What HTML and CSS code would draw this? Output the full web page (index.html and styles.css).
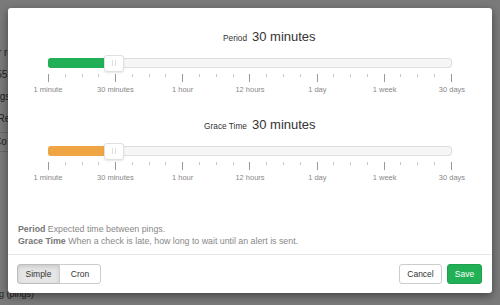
FILE: index.html
```html
<!DOCTYPE html>
<html lang="en">

<head>
    <meta charset="UTF-8">
    <meta name="viewport" content="width=device-width, initial-scale=1.0">
    <title>Update Timeout</title>
    <link rel="stylesheet" href="styles.css">
</head>

<body>
    <!-- page behind the dialog, mostly hidden -->
    <div class="page">
        <div class="page-row"><span>Error re</span></div>
        <div class="page-row"><span>2c1559</span></div>
        <div class="page-row"><span>Tags:</span></div>
        <div class="page-row"><span>Ref</span></div>
        <div class="page-row page-row-line"><span>Co</span></div>
        <div class="page-foot"><span>Last ping (pings)</span></div>
    </div>
    <div class="backdrop"></div>

    <div class="modal">
        <div class="modal-body">
            <!-- period -->
            <div class="slider-group">
                <h2 class="slider-title">
                    <span class="slider-label">Period</span>
                    <span class="slider-value">30 minutes</span>
                </h2>
                <div class="track">
                    <div class="fill fill-period" style="width: 56px"></div>
                    <div class="handle" style="left: 55px"></div>
                </div>
                <div class="ticks">
                    <span class="tick major"></span><span class="tick"></span><span class="tick"></span><span class="tick"></span>
                    <span class="tick major"></span><span class="tick"></span><span class="tick"></span><span class="tick"></span>
                    <span class="tick major"></span><span class="tick"></span><span class="tick"></span><span class="tick"></span>
                    <span class="tick major"></span><span class="tick"></span><span class="tick"></span><span class="tick"></span>
                    <span class="tick major"></span><span class="tick"></span><span class="tick"></span><span class="tick"></span>
                    <span class="tick major"></span><span class="tick"></span><span class="tick"></span><span class="tick"></span>
                    <span class="tick major"></span>
                </div>
                <div class="tick-labels">
                    <span>1 minute</span>
                    <span>30 minutes</span>
                    <span>1 hour</span>
                    <span>12 hours</span>
                    <span>1 day</span>
                    <span>1 week</span>
                    <span>30 days</span>
                </div>
            </div>

            <!-- grace time -->
            <div class="slider-group">
                <h2 class="slider-title">
                    <span class="slider-label">Grace Time</span>
                    <span class="slider-value">30 minutes</span>
                </h2>
                <div class="track">
                    <div class="fill fill-grace" style="width: 56px"></div>
                    <div class="handle" style="left: 55px"></div>
                </div>
                <div class="ticks">
                    <span class="tick major"></span><span class="tick"></span><span class="tick"></span><span class="tick"></span>
                    <span class="tick major"></span><span class="tick"></span><span class="tick"></span><span class="tick"></span>
                    <span class="tick major"></span><span class="tick"></span><span class="tick"></span><span class="tick"></span>
                    <span class="tick major"></span><span class="tick"></span><span class="tick"></span><span class="tick"></span>
                    <span class="tick major"></span><span class="tick"></span><span class="tick"></span><span class="tick"></span>
                    <span class="tick major"></span><span class="tick"></span><span class="tick"></span><span class="tick"></span>
                    <span class="tick major"></span>
                </div>
                <div class="tick-labels">
                    <span>1 minute</span>
                    <span>30 minutes</span>
                    <span>1 hour</span>
                    <span>12 hours</span>
                    <span>1 day</span>
                    <span>1 week</span>
                    <span>30 days</span>
                </div>
            </div>

            <div class="help">
                <p><b>Period</b> Expected time between pings.</p>
                <p><b>Grace Time</b> When a check is late, how long to wait until an alert is sent.</p>
            </div>
        </div>

        <div class="modal-footer">
            <div class="btn-group">
                <button type="button" class="btn btn-simple active">Simple</button>
                <button type="button" class="btn btn-cron">Cron</button>
            </div>
            <div class="footer-right">
                <button type="button" class="btn btn-cancel">Cancel</button>
                <button type="button" class="btn btn-save">Save</button>
            </div>
        </div>
    </div>
</body>

</html>
```

FILE: styles.css
```css
html,
body {
    margin: 0;
    padding: 0;
}

body {
    width: 500px;
    height: 305px;
    overflow: hidden;
    position: relative;
    font-family: "Liberation Sans", Arial, sans-serif;
    color: #333;
}

p,
h2 {
    margin: 0;
}

button {
    cursor: pointer;
    font-family: inherit;
}

/* page behind */
.page {
    height: 305px;
    box-sizing: border-box;
    padding-top: 42px;
    background: #f4f4f4;
    color: #444;
    font-size: 10px;
}

.page-row {
    width: 13px;
    height: 22px;
    line-height: 22px;
    display: flex;
    justify-content: flex-end;
    overflow: hidden;
    white-space: nowrap;
}

.page-row-line {
    width: 40px;
    margin-top: 2px;
    height: 18px;
    line-height: 18px;
    border-top: 1px solid #ccc;
    border-bottom: 1px solid #ccc;
    justify-content: flex-start;
}

.page-row-line span {
    margin-left: -6px;
}

.page-foot {
    width: 34px;
    margin-top: 137px;
    display: flex;
    justify-content: flex-end;
    overflow: hidden;
    white-space: nowrap;
    font-size: 9px;
}

.backdrop {
    position: absolute;
    inset: 0;
    background: rgba(0, 0, 0, 0.5);
}

/* dialog */
.modal {
    position: absolute;
    top: 8px;
    left: 8px;
    width: 484px;
    height: 285px;
    display: flex;
    flex-direction: column;
    background: #fff;
    border-radius: 3px;
    box-shadow: 0 3px 9px rgba(0, 0, 0, 0.45);
}

.modal-body {
    flex: 1;
    padding: 21px 10px 0;
}

.slider-group {
    margin: 0 30px 22px;
}

.slider-title {
    display: grid;
    grid-template-columns: 1fr 1fr;
    column-gap: 5px;
    align-items: baseline;
    font-weight: normal;
    font-size: 13px;
    line-height: 16px;
    color: #333;
    margin-right: 1px;
}

.slider-label {
    text-align: right;
    font-size: 8.3px;
}

/* track */
.track {
    position: relative;
    display: flex;
    height: 10px;
    margin-top: 12px;
    box-sizing: border-box;
    border: 1px solid #dedede;
    border-radius: 3px;
    background: #f6f6f6;
}

.fill {
    margin: -1px 0 -1px -1px;
    border-radius: 3px 0 0 3px;
}

.fill-period {
    background: #22b057;
}

.fill-grace {
    background: #f0a545;
}

.handle {
    position: absolute;
    top: -4px;
    width: 20px;
    height: 17px;
    box-sizing: border-box;
    border: 1px solid #e0e0e0;
    border-radius: 3px;
    background: #fff;
    box-shadow: 0 1px 2px rgba(0, 0, 0, 0.1);
}

.handle::before {
    content: "";
    position: absolute;
    top: 4px;
    left: 7px;
    width: 2px;
    height: 6px;
    border-left: 1px solid #e0e0e0;
    border-right: 1px solid #e0e0e0;
}

/* scale */
.ticks {
    display: flex;
    justify-content: space-between;
    align-items: flex-start;
    height: 8px;
    margin-top: 6px;
}

.tick {
    width: 1px;
    height: 3px;
    background: #c8c8c8;
}

.tick.major {
    height: 8px;
    background: #999;
}

.tick-labels {
    display: flex;
    justify-content: space-between;
    margin: 3px -30px 0;
    font-size: 7.5px;
    line-height: 10px;
    color: #888;
}

.tick-labels span {
    width: 60px;
    text-align: center;
}

/* help text, margin collapses with the slider group above */
.help {
    margin-top: 40px;
    font-size: 8.8px;
    line-height: 12px;
    color: #888;
}

.help b {
    color: #777;
}

/* footer */
.modal-footer {
    display: flex;
    justify-content: space-between;
    padding: 9px 10px 9px 9px;
    border-top: 1px solid #e8e8e8;
}

.btn {
    height: 20px;
    padding: 0;
    font-size: 8.5px;
    color: #333;
    background: #fff;
    border: 1px solid #ccc;
    border-radius: 3px;
}

.btn-group {
    display: flex;
}

.btn-group .btn-simple {
    width: 43px;
    border-radius: 3px 0 0 3px;
}

.btn-group .btn-cron {
    width: 42px;
    margin-left: -1px;
    border-radius: 0 3px 3px 0;
}

.btn.active {
    background: #e6e6e6;
    border-color: #bdbdbd;
    box-shadow: inset 0 2px 4px rgba(0, 0, 0, 0.12);
}

.footer-right {
    display: flex;
    gap: 5px;
}

.btn-cancel {
    width: 43px;
}

.btn-save {
    width: 35px;
    color: #fff;
    background: #22b057;
    border-color: #1fa04f;
}
```
